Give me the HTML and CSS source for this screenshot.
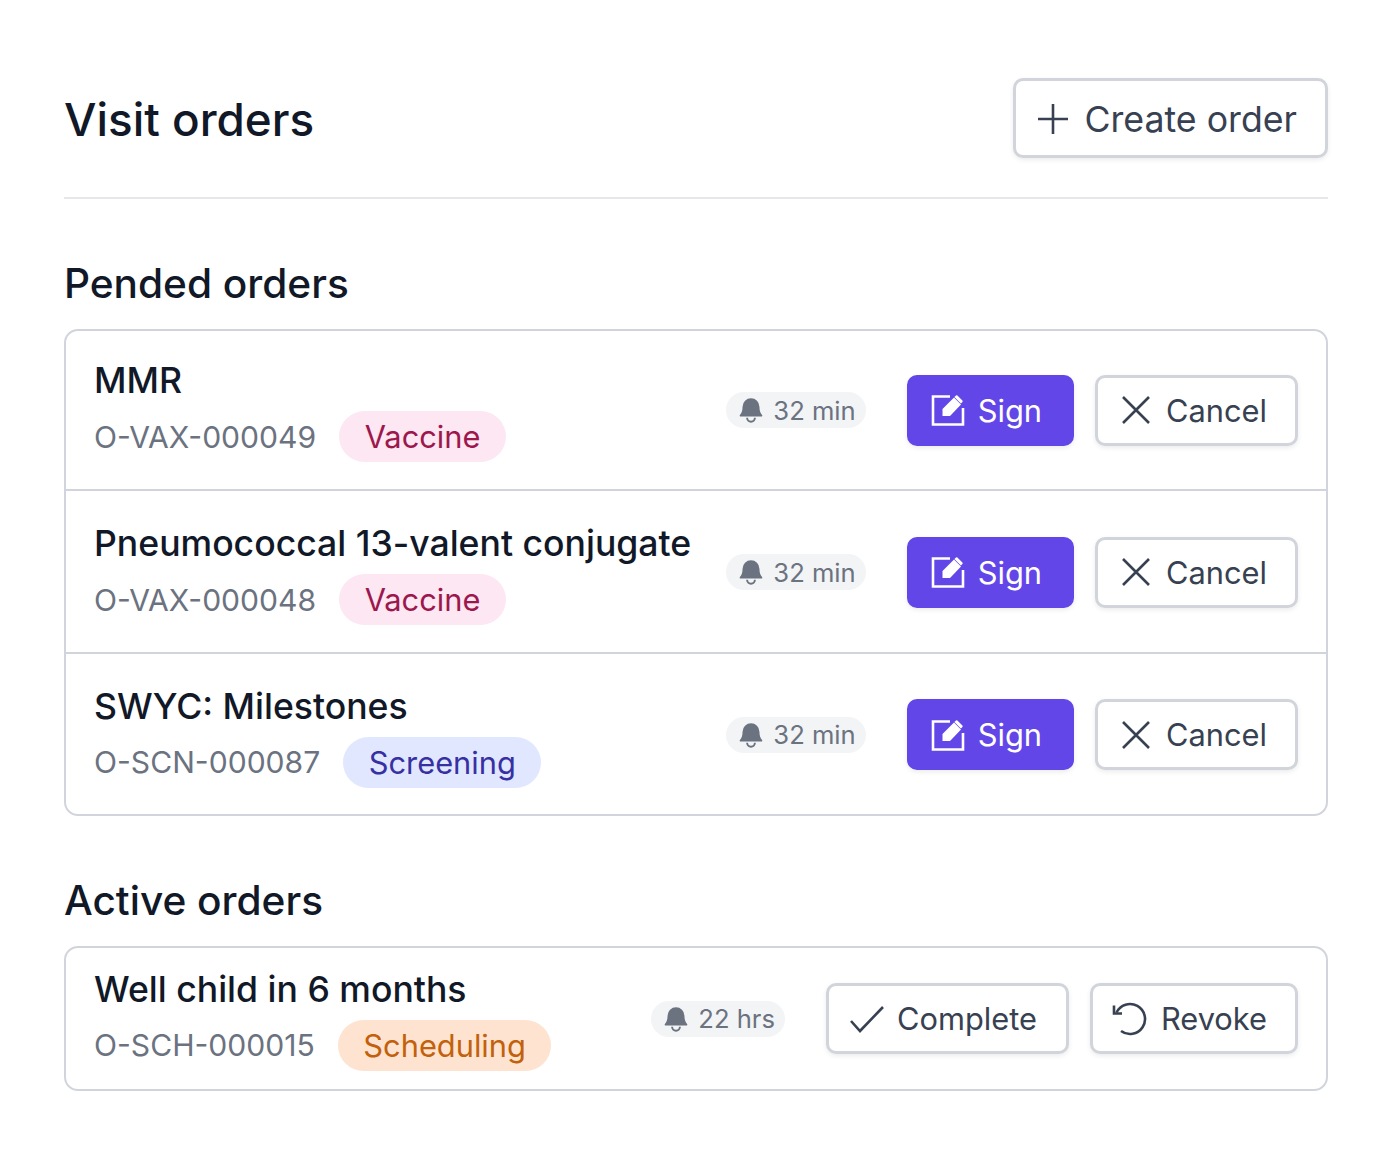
FILE: index.html
```html
<!DOCTYPE html>
<html lang="en">
<head>
    <meta charset="UTF-8">
    <meta name="viewport" content="width=device-width, initial-scale=1.0">
    <title>Visit orders</title>
    <link rel="stylesheet" href="styles.css">
</head>
<body>
    <div class="page">
        <header class="page-header">
            <h1>Visit orders</h1>
            <button class="btn btn-large">
                <svg class="icon" viewBox="0 0 32 32"><path d="M15 1v30M0 16h30"/></svg>
                Create order
            </button>
        </header>

        <h2 class="section-title">Pended orders</h2>
        <div class="card">
            <div class="order">
                <div class="order-info">
                    <div class="order-name">MMR</div>
                    <div class="order-meta">
                        <span class="order-id">O-VAX-000049</span>
                        <span class="tag tag-vaccine">Vaccine</span>
                    </div>
                </div>
                <span class="timer">
                    <svg class="bell" viewBox="0 0 20 20"><path d="M10 1a6.500 6.500 0 0 0-6.500 6.500c0 3.200-.8 5-2 6.300a.7.7 0 0 0 .5 1.200h16a.7.7 0 0 0 .5-1.200c-1.200-1.300-2-3.100-2-6.300A6.500 6.500 0 0 0 10 1z"/><path class="bell-clapper" d="M7 16a3 3 0 0 0 6 0"/></svg>
                    32 min
                </span>
                <button class="btn btn-primary">
                    <svg class="icon" viewBox="0 0 32 32"><path d="M18 2.500H1v28h30V14"/><path class="pen" d="M10.500 22v-7L22 3.500l7 7L18 22z"/><path class="pen" d="M24 1.500a1 1 0 0 1 1.400 0l5 5a1 1 0 0 1 0 1.400l-1.500 1.500-6.500-6.500z"/></svg>
                    Sign
                </button>
                <button class="btn">
                    <svg class="icon" viewBox="0 0 32 32"><path d="M3 3l26 26M29 3L3 29"/></svg>
                    Cancel
                </button>
            </div>
            <div class="order">
                <div class="order-info">
                    <div class="order-name">Pneumococcal 13-valent conjugate</div>
                    <div class="order-meta">
                        <span class="order-id">O-VAX-000048</span>
                        <span class="tag tag-vaccine">Vaccine</span>
                    </div>
                </div>
                <span class="timer">
                    <svg class="bell" viewBox="0 0 20 20"><path d="M10 1a6.500 6.500 0 0 0-6.500 6.500c0 3.200-.8 5-2 6.300a.7.7 0 0 0 .5 1.200h16a.7.7 0 0 0 .5-1.200c-1.200-1.300-2-3.100-2-6.300A6.500 6.500 0 0 0 10 1z"/><path class="bell-clapper" d="M7 16a3 3 0 0 0 6 0"/></svg>
                    32 min
                </span>
                <button class="btn btn-primary">
                    <svg class="icon" viewBox="0 0 32 32"><path d="M18 2.500H1v28h30V14"/><path class="pen" d="M10.500 22v-7L22 3.500l7 7L18 22z"/><path class="pen" d="M24 1.500a1 1 0 0 1 1.400 0l5 5a1 1 0 0 1 0 1.400l-1.500 1.500-6.500-6.500z"/></svg>
                    Sign
                </button>
                <button class="btn">
                    <svg class="icon" viewBox="0 0 32 32"><path d="M3 3l26 26M29 3L3 29"/></svg>
                    Cancel
                </button>
            </div>
            <div class="order">
                <div class="order-info">
                    <div class="order-name">SWYC: Milestones</div>
                    <div class="order-meta">
                        <span class="order-id">O-SCN-000087</span>
                        <span class="tag tag-screening">Screening</span>
                    </div>
                </div>
                <span class="timer">
                    <svg class="bell" viewBox="0 0 20 20"><path d="M10 1a6.500 6.500 0 0 0-6.500 6.500c0 3.200-.8 5-2 6.300a.7.7 0 0 0 .5 1.200h16a.7.7 0 0 0 .5-1.200c-1.200-1.300-2-3.100-2-6.300A6.500 6.500 0 0 0 10 1z"/><path class="bell-clapper" d="M7 16a3 3 0 0 0 6 0"/></svg>
                    32 min
                </span>
                <button class="btn btn-primary">
                    <svg class="icon" viewBox="0 0 32 32"><path d="M18 2.500H1v28h30V14"/><path class="pen" d="M10.500 22v-7L22 3.500l7 7L18 22z"/><path class="pen" d="M24 1.500a1 1 0 0 1 1.400 0l5 5a1 1 0 0 1 0 1.400l-1.500 1.500-6.500-6.500z"/></svg>
                    Sign
                </button>
                <button class="btn">
                    <svg class="icon" viewBox="0 0 32 32"><path d="M3 3l26 26M29 3L3 29"/></svg>
                    Cancel
                </button>
            </div>
        </div>

        <h2 class="section-title">Active orders</h2>
        <div class="card">
            <div class="order order-active">
                <div class="order-info">
                    <div class="order-name">Well child in 6 months</div>
                    <div class="order-meta">
                        <span class="order-id">O-SCH-000015</span>
                        <span class="tag tag-scheduling">Scheduling</span>
                    </div>
                </div>
                <span class="timer">
                    <svg class="bell" viewBox="0 0 20 20"><path d="M10 1a6.500 6.500 0 0 0-6.500 6.500c0 3.200-.8 5-2 6.300a.7.7 0 0 0 .5 1.200h16a.7.7 0 0 0 .5-1.200c-1.200-1.300-2-3.100-2-6.300A6.500 6.500 0 0 0 10 1z"/><path class="bell-clapper" d="M7 16a3 3 0 0 0 6 0"/></svg>
                    22 hrs
                </span>
                <button class="btn">
                    <svg class="icon" viewBox="0 0 32 32"><path d="M0 18l9 10L32 4"/></svg>
                    Complete
                </button>
                <button class="btn">
                    <svg class="icon" viewBox="0 0 32 32"><path d="M6 28A15 15 0 1 0 1.500 9.500"/><path d="M-1 2.500v8h8"/></svg>
                    Revoke
                </button>
            </div>
        </div>
    </div>
</body>
</html>
```

FILE: styles.css
```css
body {
    font-family: 'Inter', sans-serif;
    font-variation-settings: 'opsz' 14;
    margin: 0;
    background-color: #fff;
    color: #111827;
}

.page {
    padding: 78px 60px 78px 64px;
}

.page-header {
    display: flex;
    justify-content: space-between;
    align-items: center;
    padding-bottom: 39px;
    border-bottom: 2px solid #e5e7eb;
}

h1 {
    margin: 0;
    padding-top: 4px;
    font-size: 45.8px;
    font-weight: 500;
    line-height: 76px;
}

h2 {
    margin: 0;
    font-size: 40.6px;
    font-weight: 500;
    line-height: 46px;
}

.section-title {
    margin-top: 62px;
    margin-bottom: 22px;
}

.card {
    border: 2px solid #d1d5db;
    border-radius: 14px;
}

.order {
    display: flex;
    align-items: center;
    height: 162.5px;
    padding: 2px 28px 0;
    box-sizing: border-box;
    border-top: 2px solid #d1d5db;
}

.order:first-child {
    border-top: none;
    height: 158px;
    padding-top: 0;
}

.order:first-child.order-active {
    height: 141px;
}

.order-info {
    flex: 1;
    padding-top: 2px;
}

.order + .order .order-info {
    padding-top: 4px;
}

.order-name {
    font-size: 35.6px;
    font-weight: 500;
    line-height: 42px;
}

.order-meta {
    display: flex;
    align-items: center;
    gap: 23px;
    margin-top: 9px;
}

.order-id {
    font-size: 30.1px;
    color: #6b7280;
}

.tag {
    font-size: 30.8px;
    line-height: 51px;
    padding: 0 25.5px;
    border-radius: 26px;
}

.tag-vaccine {
    background-color: #fce7f3;
    color: #9d174d;
}

.tag-screening {
    background-color: #e0e7ff;
    color: #3730a3;
}

.tag-scheduling {
    background-color: #fee4d0;
    color: #c2610c;
}

.timer {
    display: flex;
    align-items: center;
    gap: 9px;
    height: 36px;
    padding: 0 10px 0 12px;
    margin-right: 41px;
    border-radius: 18px;
    background-color: #f3f4f6;
    color: #6b7280;
    font-size: 25.6px;
}

.bell {
    width: 26px;
    height: 26px;
    fill: #6b7280;
}

.bell-clapper {
    fill: none;
    stroke: #6b7280;
    stroke-width: 1.5;
}

.btn {
    display: flex;
    align-items: center;
    gap: 14px;
    height: 71px;
    padding: 0 28px 0 22px;
    margin-left: 21px;
    box-sizing: border-box;
    background-color: #fff;
    border: 3px solid #d1d5db;
    border-radius: 10px;
    box-shadow: 0 2px 5px rgba(0, 0, 0, 0.08);
    color: #374151;
    font-family: inherit;
    font-variation-settings: inherit;
    font-size: 30.8px;
    font-weight: 400;
}

.timer + .btn {
    margin-left: 0;
    padding-right: 29px;
}

.btn-large {
    height: 80px;
    margin-left: 0;
    padding-top: 1px;
    font-size: 35.7px;
}

.btn-primary {
    border-color: #6346e8;
    background-color: #6346e8;
    color: #fff;
}

.icon {
    width: 32px;
    height: 32px;
    overflow: visible;
    fill: none;
    stroke: currentColor;
    stroke-width: 2.6;
}

.pen {
    fill: currentColor;
    stroke: none;
}
```
